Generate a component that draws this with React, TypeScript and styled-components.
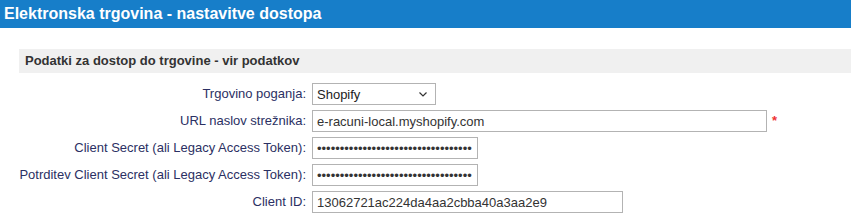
import React from 'react';
import styled, { createGlobalStyle } from 'styled-components';

const GlobalStyle = createGlobalStyle`
  body {
    margin: 0;
    background: #fff;
    font-family: "Liberation Sans", Arial, sans-serif;
  }
`;

const TitleBar = styled.div`
  height: 28px;
  background: #177ec9;
  color: #fff;
  font-size: 16px;
  font-weight: bold;
  line-height: 28px;
  padding-left: 4px;
`;

const Section = styled.div`
  margin: 21px 0 0 19px;
`;

const SectionHead = styled.div`
  height: 24px;
  line-height: 24px;
  background: #f0f0f0;
  color: #333;
  font-size: 13px;
  font-weight: bold;
  padding-left: 6px;
`;

const Form = styled.div`
  display: grid;
  grid-template-columns: 287px auto;
  grid-auto-rows: 22px;
  column-gap: 6px;
  row-gap: 5px;
  margin-top: 10px;
`;

const Label = styled.label`
  text-align: right;
  font-size: 13px;
  line-height: 22px;
  color: #2b3063;
  white-space: nowrap;
`;

const Field = styled.div`
  display: flex;
  align-items: center;
  gap: 5px;
`;

const Input = styled.input<{ $w: number }>`
  box-sizing: border-box;
  width: ${p => p.$w}px;
  height: 22px;
  border: 1px solid #b3b3b3;
  padding: 0 4px;
  font-family: "Liberation Sans", Arial, sans-serif;
  font-size: 13px;
  color: #333;
  outline: none;
`;

const SelectWrap = styled.div`
  position: relative;
  width: 124px;
  height: 22px;
`;

const Select = styled.select`
  appearance: none;
  box-sizing: border-box;
  width: 100%;
  height: 100%;
  border: 1px solid #b3b3b3;
  background: #fff;
  padding: 0 4px;
  font-family: "Liberation Sans", Arial, sans-serif;
  font-size: 13px;
  color: #222;
  outline: none;
`;

const Chevron = styled.svg`
  position: absolute;
  right: 9px;
  top: 9px;
  pointer-events: none;
`;

const Required = styled.span`
  color: #ee3333;
  font-size: 13px;
  font-weight: bold;
  line-height: 1;
  margin-top: -1px;
`;

const secret = '••••••••••••••••••••••••••••••••••';

export default function App() {
  return (
    <>
      <GlobalStyle />
      <TitleBar>Elektronska trgovina - nastavitve dostopa</TitleBar>
      <Section>
        <SectionHead>Podatki za dostop do trgovine - vir podatkov</SectionHead>
        <Form>
          <Label>Trgovino poganja:</Label>
          <Field>
            <SelectWrap>
              <Select defaultValue="shopify">
                <option value="shopify">Shopify</option>
              </Select>
              <Chevron width="8" height="5" viewBox="0 0 8 5">
                <path d="M0.5 0.5 L4 4 L7.5 0.5" fill="none" stroke="#333" strokeWidth="1.2" />
              </Chevron>
            </SelectWrap>
          </Field>

          <Label>URL naslov strežnika:</Label>
          <Field>
            <Input $w={455} defaultValue="e-racuni-local.myshopify.com" />
            <Required>*</Required>
          </Field>

          <Label>Client Secret (ali Legacy Access Token):</Label>
          <Field>
            <Input $w={166} type="password" defaultValue={secret} />
          </Field>

          <Label>Potrditev Client Secret (ali Legacy Access Token):</Label>
          <Field>
            <Input $w={166} type="password" defaultValue={secret} />
          </Field>

          <Label>Client ID:</Label>
          <Field>
            <Input $w={311} defaultValue="13062721ac224da4aa2cbba40a3aa2e9" />
          </Field>
        </Form>
      </Section>
    </>
  );
}
